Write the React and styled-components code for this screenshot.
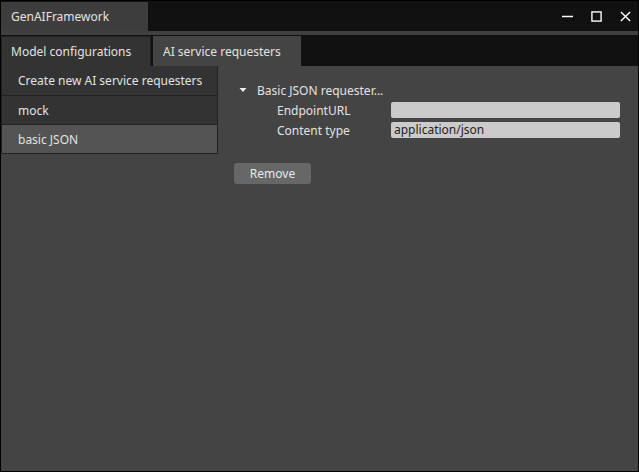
import React, { useState } from "react";
import styled, { createGlobalStyle } from "styled-components";

const Global = createGlobalStyle`
  html, body { margin: 0; padding: 0; background: #000; }
  body { font-family: "Noto Sans", "Open Sans", sans-serif; font-size: 12px; }
  * { box-sizing: border-box; }
`;

const requesters = ["mock", "basic JSON"];

const App = () => {
  const [tab, setTab] = useState("AI");
  const [selected, setSelected] = useState("basic JSON");

  return (
    <>
      <Global />
      <Window>
        <TitleBar>
          <TitleTab>GenAIFramework</TitleTab>
          <Controls>
            <CtrlIcon viewBox="0 0 12 12">
              <path d="M0 6h12" stroke="#fff" strokeWidth="1.6" />
            </CtrlIcon>
            <CtrlIcon viewBox="0 0 12 12">
              <rect x="1" y="1" width="10" height="10" fill="none" stroke="#fff" strokeWidth="1.5" />
            </CtrlIcon>
            <CtrlIcon viewBox="0 0 12 12">
              <path d="M1 1l10 10M11 1L1 11" stroke="#fff" strokeWidth="1.5" />
            </CtrlIcon>
          </Controls>
        </TitleBar>
        <Separator />

        <TabBar>
          <Tab active={tab === "MODEL"} width={150} onClick={() => setTab("MODEL")}>
            Model configurations
          </Tab>
          <Tab active={tab === "AI"} width={148} onClick={() => setTab("AI")}>
            AI service requesters
          </Tab>
        </TabBar>

        <Body>
          <List>
            <Item>Create new AI service requesters</Item>
            {requesters.map((r) => (
              <Item key={r} active={selected === r} onClick={() => setSelected(r)}>
                {r}
              </Item>
            ))}
          </List>

          <Panel>
            <Header>
              <Caret viewBox="0 0 8 6">
                <path d="M0.5 1h7L4 5z" fill="#eee" />
              </Caret>
              Basic JSON requester...
            </Header>
            <Field>
              <Label>EndpointURL</Label>
              <Input />
            </Field>
            <Field>
              <Label>Content type</Label>
              <Input>application/json</Input>
            </Field>
            <Button>Remove</Button>
          </Panel>
        </Body>
      </Window>
    </>
  );
};

export default App;

const Window = styled.div`
  width: 639px;
  height: 472px;
  border: 1px solid #000;
  display: flex;
  flex-direction: column;
  background: #444;
  color: #e2e2e2;
  white-space: nowrap;
`;

const TitleBar = styled.div`
  height: 30px;
  padding-top: 1px;
  background: #111;
  display: flex;
  align-items: stretch;
`;

const TitleTab = styled.div`
  width: 147px;
  background: #3d3d3d;
  padding-left: 10px;
  display: flex;
  align-items: center;
  padding-bottom: 1px;
`;

const Controls = styled.div`
  margin-left: auto;
  display: flex;
  align-items: center;
  gap: 18px;
  padding-right: 7px;
  padding-bottom: 1px;
`;

const CtrlIcon = styled.svg`
  width: 11px;
  height: 11px;
`;

const Separator = styled.div`
  height: 4px;
  background: #404040;
`;

const TabBar = styled.div`
  height: 31px;
  background: #111;
  display: flex;
  gap: 2px;
  padding-top: 1px;
`;

const Tab = styled.div`
  width: ${({ width }) => width}px;
  background: ${({ active }) => (active ? "#444" : "#333")};
  border: ${({ active }) => (active ? "none" : "1px solid #222")};
  border-bottom: none;
  padding-left: ${({ active }) => (active ? 10 : 9)}px;
  display: flex;
  align-items: center;
  cursor: pointer;
`;

const Body = styled.div`
  flex: 1;
  display: flex;
  align-items: flex-start;
  background: #444;
`;

const List = styled.div`
  width: 217px;
  display: flex;
  flex-direction: column;
  border-right: 1px solid #222;
  border-bottom: 1px solid #222;
`;

const Item = styled.div`
  height: 29px;
  padding-left: 16px;
  display: flex;
  align-items: center;
  background: ${({ active }) => (active ? "#545454" : "#333")};
  border-left: 1px solid #222;
  & + & {
    border-top: 1px solid #222;
  }
  cursor: pointer;
`;

const Panel = styled.div`
  flex: 1;
  padding: 14px 17px 0 16px;
  display: flex;
  flex-direction: column;
  align-items: flex-start;
`;

const Header = styled.div`
  height: 20px;
  display: flex;
  align-items: center;
  gap: 10px;
  padding-left: 5px;
`;

const Caret = styled.svg`
  width: 8px;
  height: 6px;
`;

const Field = styled.div`
  height: 20px;
  width: 100%;
  display: flex;
  align-items: center;
  padding-left: 43px;
`;

const Label = styled.div`
  width: 114px;
  flex-shrink: 0;
`;

const Input = styled.div`
  width: 229px;
  height: 16px;
  background: #cbcbcb;
  border-radius: 2px;
  color: #1e1e1e;
  padding-left: 3px;
  line-height: 16px;
`;

const Button = styled.div`
  margin-top: 23px;
  width: 77px;
  height: 21px;
  background: #676767;
  border-radius: 3px;
  display: flex;
  align-items: center;
  justify-content: center;
  color: #e8e8e8;
`;
